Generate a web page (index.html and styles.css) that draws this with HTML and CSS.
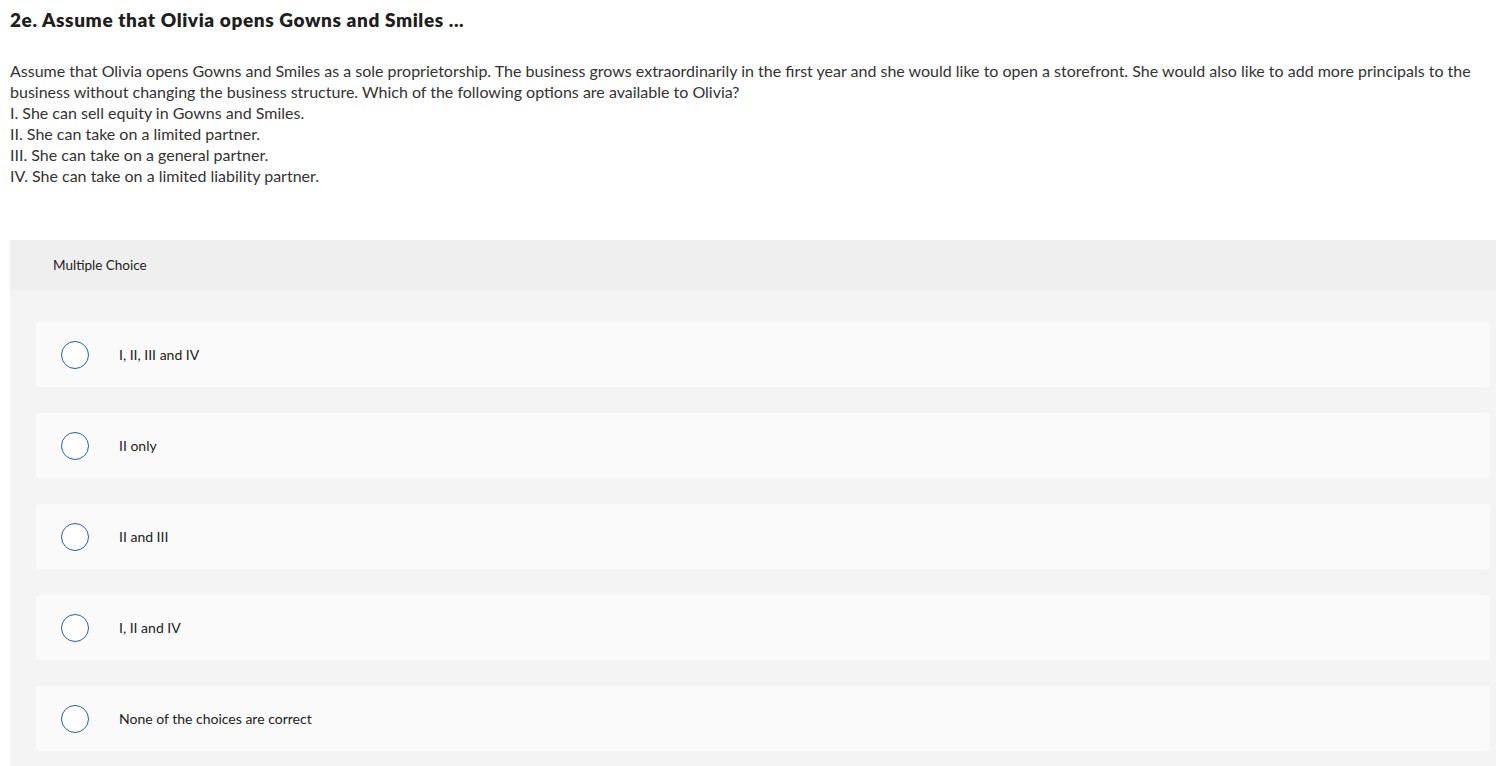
FILE: index.html
```html
<!DOCTYPE html>
<html>
<head>
<meta charset="utf-8">
<link rel="stylesheet" href="styles.css">
</head>
<body>
<div class="page">
  <h1 class="title">2e. Assume that Olivia opens Gowns and Smiles ...</h1>
  <div class="prompt">
    <p>Assume that Olivia opens Gowns and Smiles as a sole proprietorship. The business grows extraordinarily in the first year and she would like to open a storefront. She would also like to add more principals to the business without changing the business structure. Which of the following options are available to Olivia?</p>
    <p>I. She can sell equity in Gowns and Smiles.</p>
    <p>II. She can take on a limited partner.</p>
    <p>III. She can take on a general partner.</p>
    <p>IV. She can take on a limited liability partner.</p>
  </div>
  <div class="mc">
    <div class="mc-head">Multiple Choice</div>
    <div class="mc-body">
      <div class="choice"><span class="radio"></span><span class="label">I, II, III and IV</span></div>
      <div class="choice"><span class="radio"></span><span class="label">II only</span></div>
      <div class="choice"><span class="radio"></span><span class="label">II and III</span></div>
      <div class="choice"><span class="radio"></span><span class="label">I, II and IV</span></div>
      <div class="choice"><span class="radio"></span><span class="label">None of the choices are correct</span></div>
    </div>
  </div>
</div>
</body>
</html>
```
FILE: styles.css
```css
html, body {
  margin: 0;
  padding: 0;
  background: #fff;
  overflow: hidden;
}
body {
  font-family: Lato, "Open Sans", sans-serif;
  color: #333;
}
.page {
  padding: 0 0 0 10px;
}
.title {
  margin: 0;
  padding-top: 8px;
  font-size: 19px;
  line-height: 24px;
  font-weight: 800;
  letter-spacing: 0.6px;
  color: #1f1f1f;
}
.prompt {
  margin-top: 28px;
  padding-right: 10px;
  font-size: 16px;
  line-height: 21px;
  color: #333;
}
.prompt p {
  margin: 0;
}
.mc {
  margin-top: 54px;
  background: #f4f4f4;
}
.mc-head {
  height: 50px;
  display: flex;
  align-items: center;
  padding-left: 43px;
  background: #efefef;
  font-size: 13.5px;
  color: #222;
}
.mc-body {
  padding: 32px 6px 20px 26px;
  display: flex;
  flex-direction: column;
  gap: 26px;
}
.choice {
  height: 65px;
  background: #fafafa;
  border-radius: 3px;
  display: flex;
  align-items: center;
  padding-left: 25px;
}
.radio {
  width: 26px;
  height: 26px;
  border: 1.5px solid #2a5f94;
  border-radius: 50%;
  background: #fff;
  flex: none;
}
.label {
  margin-left: 30px;
  font-size: 14px;
  color: #222;
}
```
